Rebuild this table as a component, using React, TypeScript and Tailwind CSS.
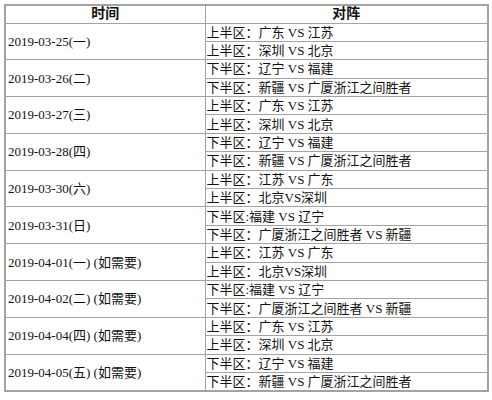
const groups = [
  { date: '2019-03-25(一)', rows: ['上半区：广东 VS 江苏', '上半区：深圳 VS 北京'] },
  { date: '2019-03-26(二)', rows: ['下半区：辽宁 VS 福建', '下半区：新疆 VS 广厦浙江之间胜者'] },
  { date: '2019-03-27(三)', rows: ['上半区：广东 VS 江苏', '上半区：深圳 VS 北京'] },
  { date: '2019-03-28(四)', rows: ['下半区：辽宁 VS 福建', '下半区：新疆 VS 广厦浙江之间胜者'] },
  { date: '2019-03-30(六)', rows: ['上半区：江苏 VS 广东', '上半区：北京VS深圳'] },
  { date: '2019-03-31(日)', rows: ['下半区:福建 VS 辽宁', '下半区：广厦浙江之间胜者 VS 新疆'] },
  { date: '2019-04-01(一) (如需要)', rows: ['上半区：江苏 VS 广东', '上半区：北京VS深圳'] },
  { date: '2019-04-02(二) (如需要)', rows: ['下半区:福建 VS 辽宁', '下半区：广厦浙江之间胜者 VS 新疆'] },
  { date: '2019-04-04(四) (如需要)', rows: ['上半区：广东 VS 江苏', '上半区：深圳 VS 北京'] },
  { date: '2019-04-05(五) (如需要)', rows: ['下半区：辽宁 VS 福建', '下半区：新疆 VS 广厦浙江之间胜者'] },
];

const App = () => {
  return (
    <div
      className="h-[400px] w-[492px] overflow-hidden bg-white pl-[4px] pt-[4px] text-[13px] leading-none text-[#111]"
      style={{ fontFamily: '"Liberation Serif", "Noto Sans CJK SC", serif' }}
    >
      <table className="w-[485px] table-fixed border-collapse border-2 border-[#a3a3a3]">
        <colgroup>
          <col className="w-[200px]" />
          <col />
        </colgroup>
        <thead>
          <tr className="h-[18px]">
            <th className="border border-[#a3a3a3] p-0 text-center text-[14px] font-bold">时间</th>
            <th className="border border-[#a3a3a3] p-0 text-center text-[14px] font-bold">对阵</th>
          </tr>
        </thead>
        <tbody>
          {groups.map((g, i) => (
            <>
              <tr key={i + 'a'} className="h-[18.4px]">
                <td rowSpan={2} className="border border-[#a3a3a3] py-0 pl-[2px] align-middle whitespace-pre">
                  {g.date}
                </td>
                <td className="border border-[#a3a3a3] py-0 pl-[1px] whitespace-nowrap">{g.rows[0]}</td>
              </tr>
              <tr key={i + 'b'} className="h-[18.4px]">
                <td className="border border-[#a3a3a3] py-0 pl-[1px] whitespace-nowrap">{g.rows[1]}</td>
              </tr>
            </>
          ))}
        </tbody>
      </table>
    </div>
  );
};

export default App;
